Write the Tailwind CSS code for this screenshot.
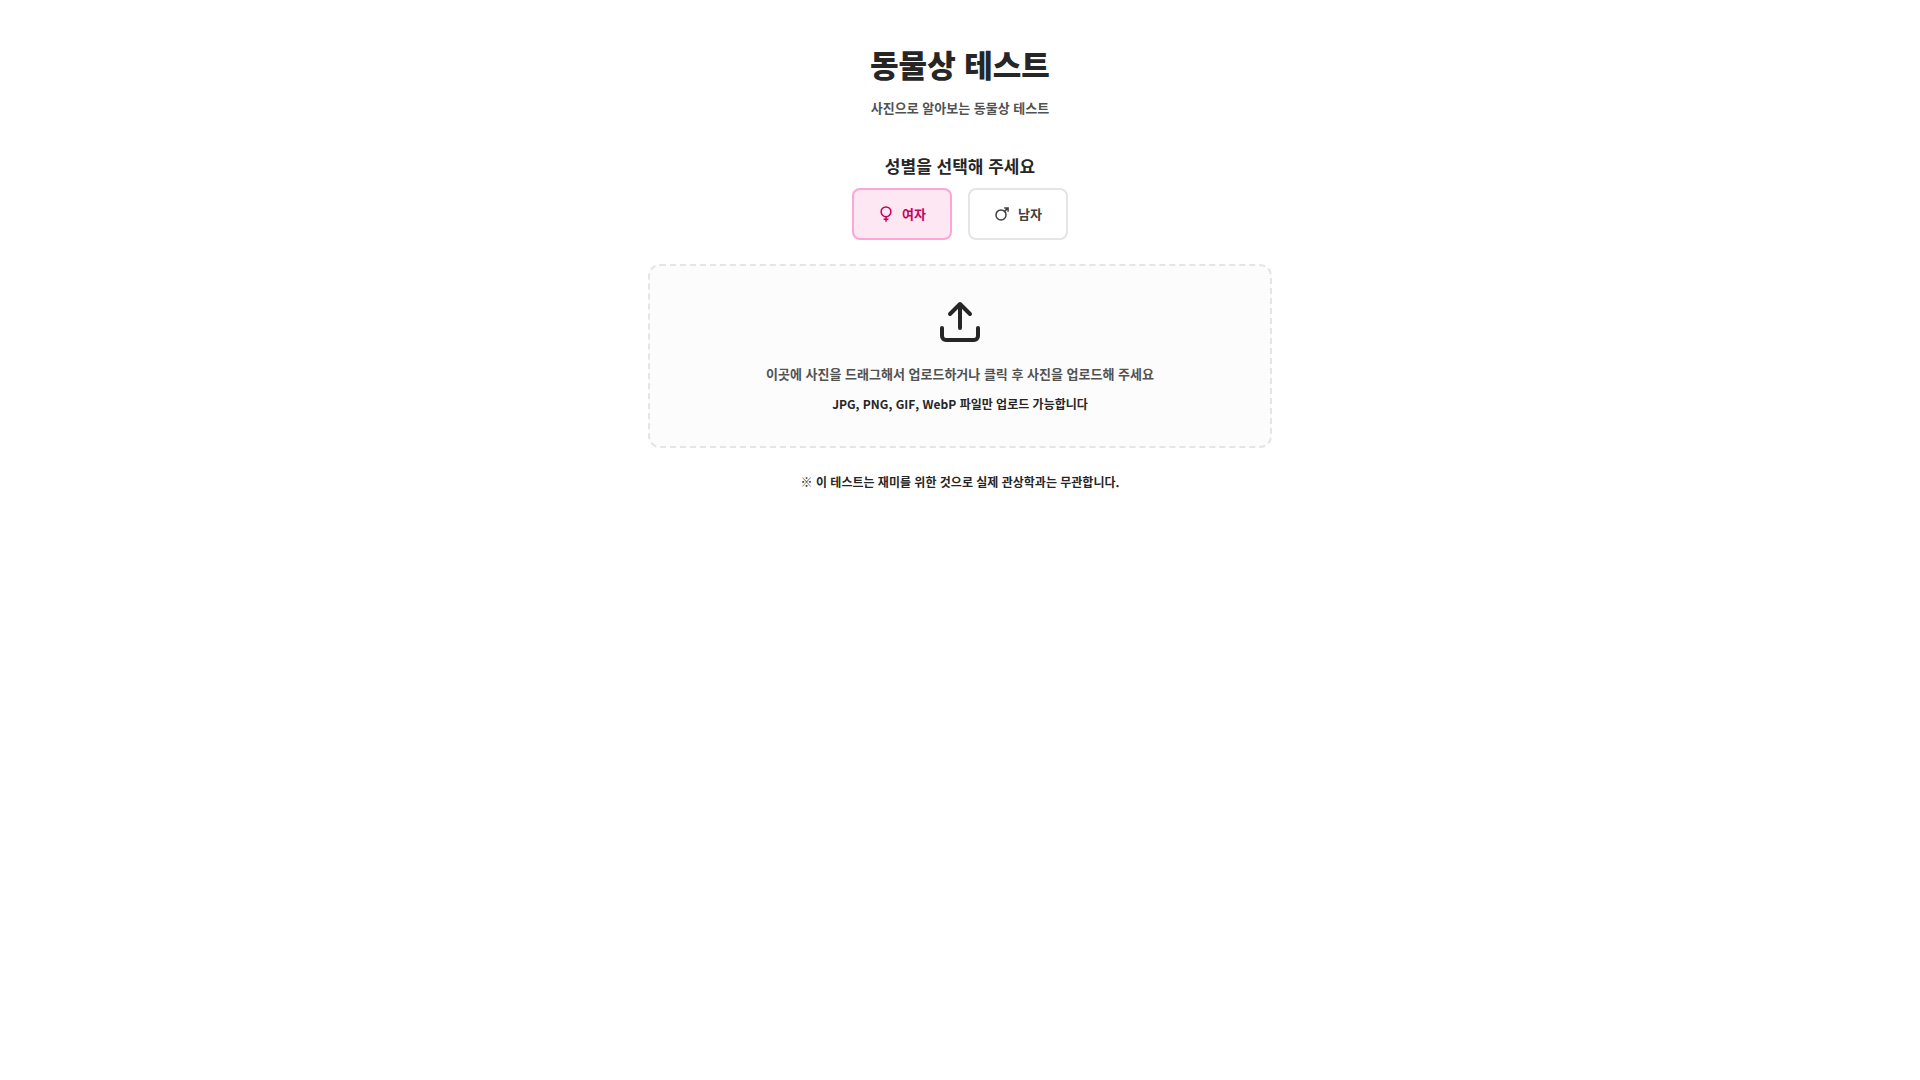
<!DOCTYPE html>
<html lang="ko">
<head>
    <meta charset="UTF-8">
    <meta name="viewport" content="width=device-width, initial-scale=1.0">
    <title>동물상 테스트</title>
    <script src="https://cdn.jsdelivr.net/npm/@tailwindcss/browser@4"></script>
</head>
<body class="bg-white font-['Noto_Sans_CJK_KR',sans-serif] font-bold text-neutral-800">
    <main class="mx-auto max-w-2xl px-6 py-11 text-center">
        <!-- Header -->
        <header class="mb-8">
            <h1 class="mb-3 text-[31px] leading-10 font-black">동물상 테스트</h1>
            <p class="text-[13px] leading-6 text-neutral-600">사진으로 알아보는 동물상 테스트</p>
        </header>

        <!-- Gender -->
        <section class="mb-6">
            <h2 class="mb-2 text-[17px] leading-7">성별을 선택해 주세요</h2>
            <div class="flex justify-center gap-4">
                <button type="button" aria-pressed="true" class="flex items-center gap-2 rounded-lg border-2 border-pink-300 bg-pink-100 px-6 py-3 text-[13px] leading-6 text-pink-700">
                    <svg class="size-4" viewBox="0 0 16 16" fill="none" stroke="currentColor" stroke-width="1.5" aria-hidden="true">
                        <circle cx="8" cy="5.8" r="4.9"/>
                        <path d="M8 10.7v5M5.6 13.2h4.8"/>
                    </svg>
                    여자
                </button>
                <button type="button" aria-pressed="false" class="flex items-center gap-2 rounded-lg border-2 border-neutral-200 bg-white px-6 py-3 text-[13px] leading-6 text-neutral-700">
                    <svg class="size-4" viewBox="0 0 16 16" fill="none" stroke="currentColor" stroke-width="1.5" aria-hidden="true">
                        <circle cx="7" cy="8.9" r="5"/>
                        <path d="M10.5 5.4l3.3-3.3M10.2 1.9h3.9v3.9"/>
                    </svg>
                    남자
                </button>
            </div>
        </section>

        <!-- Upload -->
        <label for="photo" class="flex cursor-pointer flex-col items-center rounded-xl border-2 border-dashed border-neutral-200 bg-[#fcfcfc] p-8">
            <input id="photo" type="file" accept="image/jpeg,image/png,image/gif,image/webp" class="sr-only">
            <svg class="mb-4 size-12" viewBox="0 0 24 24" fill="none" stroke="currentColor" stroke-width="2" stroke-linecap="round" stroke-linejoin="round" aria-hidden="true">
                <path d="M21 15v4a2 2 0 0 1-2 2H5a2 2 0 0 1-2-2v-4"/>
                <path d="M17 8l-5-5-5 5M12 3v12"/>
            </svg>
            <span class="mb-2 text-[13px] leading-6 text-neutral-600">이곳에 사진을 드래그해서 업로드하거나 클릭 후 사진을 업로드해 주세요</span>
            <span class="text-[12px] leading-5">JPG, PNG, GIF, WebP 파일만 업로드 가능합니다</span>
        </label>

        <p class="mt-6 text-[12px] leading-5">※ 이 테스트는 재미를 위한 것으로 실제 관상학과는 무관합니다.</p>
    </main>
</body>
</html>
